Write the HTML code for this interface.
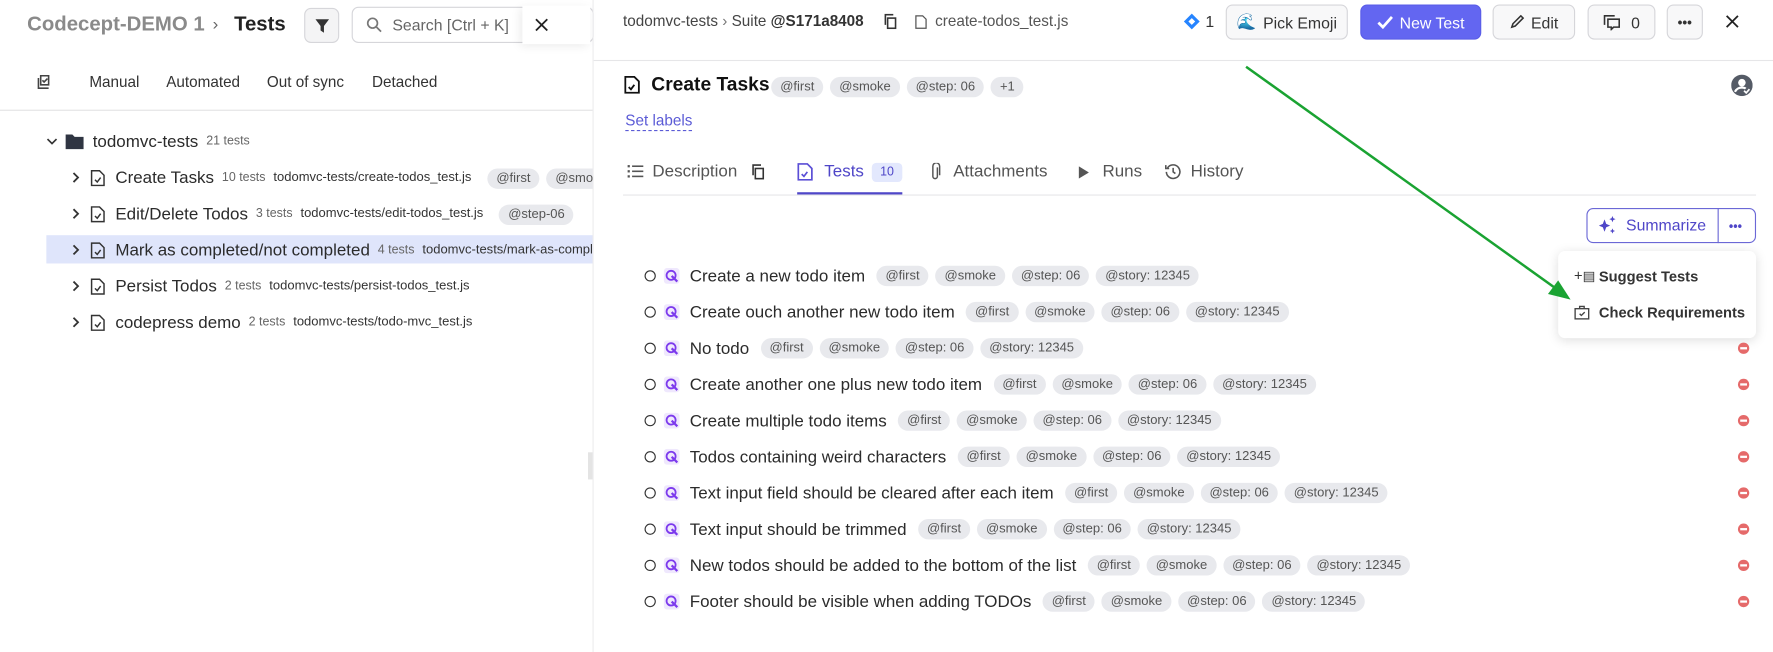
<!DOCTYPE html>
<html><head><meta charset="utf-8"><style>
*{box-sizing:border-box;margin:0;padding:0}
html,body{width:1773px;height:652px;overflow:hidden;background:#fff}
#w{position:absolute;left:0;top:0;width:1568px;height:577px;transform:scale(1.13074);transform-origin:0 0;font-family:"Liberation Sans",sans-serif;color:#333}
.a{position:absolute;white-space:nowrap}
.tag{display:inline-block;background:#e8e9ed;color:#555;border-radius:10px;font-size:11.5px;padding:2px 8px;margin-right:6px;line-height:14px;white-space:nowrap}
.btn{position:absolute;border:1px solid #d6d6da;border-radius:6px;background:#f8f8f9;font-size:14px;color:#333;display:flex;align-items:center;justify-content:center;gap:6px}
.row{position:absolute;left:0;height:26px;display:flex;align-items:center;font-size:15px;color:#2b2b2b;white-space:nowrap}
.row>*{flex-shrink:0;white-space:nowrap}
.small{font-size:11px;color:#666;margin-left:7px}
.path{font-size:11.5px;color:#333;margin-left:7px}
</style></head><body><div id="w">
<div class="a" style="left:24px;top:11px;font-size:18px;font-weight:bold;color:#8a8a8a">Codecept-DEMO 1</div>
<div class="a" style="left:188px;top:13px;font-size:15px;color:#666">›</div>
<div class="a" style="left:207px;top:11px;font-size:18px;font-weight:bold;color:#222">Tests</div>
<div class="btn" style="left:269px;top:7px;width:31px;height:31px;background:#f4f4f5"><svg width="14" height="14" viewBox="0 0 14 14"><path d="M1 1h12L8.5 7v6L5.5 11V7z" fill="#333"/></svg></div>
<div class="a" style="left:311px;top:6px;width:214px;height:32px;border:1px solid #d6d6da;border-radius:6px"></div>
<svg class="a" style="left:324px;top:15px" width="14" height="14" viewBox="0 0 14 14"><circle cx="5.5" cy="5.5" r="4.3" fill="none" stroke="#777" stroke-width="1.5"/><path d="M9 9l4 4" stroke="#777" stroke-width="1.5"/></svg>
<div class="a" style="left:347px;top:14px;font-size:14px;color:#666">Search [Ctrl + K]</div>
<div class="a" style="left:462px;top:5px;width:60px;height:34px;background:#fff;box-shadow:-2px 2px 8px rgba(0,0,0,.08)"></div>
<svg class="a" style="left:473px;top:16px" width="12" height="12" viewBox="0 0 12 12"><path d="M1 1l10 10M11 1L1 11" stroke="#222" stroke-width="1.6"/></svg>
<svg class="a" style="left:31px;top:66px" width="14" height="14" viewBox="0 0 14 14" fill="none" stroke="#444" stroke-width="1.4"><path d="M3 3v9h9"/><path d="M5 1h7v8H5z"/><path d="M6.5 5l1.5 1.5 3-3"/></svg>
<div class="a" style="left:79px;top:65px;font-size:13.5px;color:#333">Manual</div>
<div class="a" style="left:147px;top:65px;font-size:13.5px;color:#333">Automated</div>
<div class="a" style="left:236px;top:65px;font-size:13.5px;color:#333">Out of sync</div>
<div class="a" style="left:329px;top:65px;font-size:13.5px;color:#333">Detached</div>
<div class="a" style="left:0;top:97px;width:524px;height:1px;background:#e2e2e4"></div>
<div class="row" style="top:112px;left:40px"><svg width="12" height="12" viewBox="0 0 12 12"><path d="M2 4l4 4 4-4" fill="none" stroke="#333" stroke-width="1.5"/></svg><svg style="margin-left:6px" width="16" height="14" viewBox="0 0 16 14"><path d="M0 1h6l2 2h8v11H0z" fill="#2f3542"/></svg><span style="margin-left:8px">todomvc-tests</span><span class="small">21 tests</span></div>
<div class="a" style="left:41px;top:208px;width:483px;height:25px;background:#dfe5fb"></div>
<div id="tree"></div>
<div class="a" style="left:524px;top:0;width:1px;height:577px;background:#ececee"></div>
<div class="a" style="left:520px;top:400px;width:4px;height:24px;background:#e4e4e4"></div>
<div class="a" style="left:551px;top:11px;font-size:13.5px;color:#444">todomvc-tests <span style="color:#777">›</span> Suite <b style="color:#333">@S171a8408</b></div>
<svg class="a" style="left:781px;top:12px" width="13" height="14" viewBox="0 0 13 14" fill="none" stroke="#333" stroke-width="1.4"><rect x="4" y="4" width="7" height="9"/><path d="M2 10V1h7"/></svg>
<svg class="a" style="left:809px;top:13px" width="11" height="13" viewBox="0 0 11 13" fill="none" stroke="#555" stroke-width="1.1"><path d="M1 1h6l3 3v8H1z"/></svg>
<div class="a" style="left:827px;top:11px;font-size:13.5px;color:#555">create-todos_test.js</div>
<svg class="a" style="left:1046px;top:11px" width="16" height="16" viewBox="0 0 16 16"><path d="M8 1l7 7-7 7-7-7z" fill="#2684ff"/><path d="M8 5l3 3-3 3-3-3z" fill="#fff"/></svg>
<div class="a" style="left:1066px;top:11px;font-size:14px;color:#333">1</div>
<div class="btn" style="left:1084px;top:4px;width:108px;height:31px"><span style="color:#3aa0e8">🌊</span>Pick Emoji</div>
<div class="btn" style="left:1203px;top:4px;width:107px;height:31px;background:#6366f1;border-color:#5a5de8;color:#fff"><svg width="14" height="12" viewBox="0 0 14 12"><path d="M1 6l4 4 8-9" fill="none" stroke="#fff" stroke-width="2.4"/></svg>New Test</div>
<div class="btn" style="left:1320px;top:4px;width:73px;height:31px"><svg width="13" height="13" viewBox="0 0 13 13"><path d="M2 11l1-3 7-7 2 2-7 7z" fill="none" stroke="#333" stroke-width="1.4"/></svg>Edit</div>
<div class="btn" style="left:1404px;top:4px;width:60px;height:31px"><svg width="15" height="14" viewBox="0 0 15 14" fill="none" stroke="#333" stroke-width="1.4"><path d="M1 9V1h9"/><path d="M4 4h10v7H9l-2 2v-2H4z"/></svg>&nbsp;0</div>
<div class="btn" style="left:1474px;top:4px;width:32px;height:31px;font-weight:bold;font-size:12px">•••</div>
<svg class="a" style="left:1526px;top:13px" width="12" height="12" viewBox="0 0 12 12"><path d="M1 1l10 10M11 1L1 11" stroke="#222" stroke-width="1.6"/></svg>
<div class="a" style="left:525px;top:53px;width:1043px;height:1px;background:#e6e6e8"></div>
<svg class="a" style="left:552px;top:67px" width="14" height="16" viewBox="0 0 14 16" fill="none" stroke="#111" stroke-width="1.6"><path d="M1 1h8l4 4v10H1z"/><path d="M4 10l2 2 3-4"/></svg>
<div class="a" style="left:576px;top:65px;font-size:17px;font-weight:bold;color:#111">Create Tasks</div>
<div class="a" style="left:682px;top:67px"><span class="tag">@first</span><span class="tag">@smoke</span><span class="tag">@step: 06</span><span class="tag">+1</span></div>
<svg class="a" style="left:1531px;top:66px" width="19" height="19" viewBox="0 0 20 20"><circle cx="10" cy="10" r="10" fill="#555b66"/><circle cx="10" cy="7.5" r="3.5" fill="#fff"/><path d="M3.5 16c1.5-3 4-4 6.5-4s3 .5 3.5 1" stroke="#fff" stroke-width="2" fill="none"/><path d="M12 15l2 2 3-3.5" stroke="#fff" stroke-width="1.6" fill="none"/></svg>
<div class="a" style="left:553px;top:99px;font-size:13.5px;color:#5b5bd6;border-bottom:1px dashed #5b5bd6;padding-bottom:1px">Set labels</div>
<svg class="a" style="left:555px;top:145px" width="14" height="13" viewBox="0 0 14 13" fill="#555"><rect x="0" y="1" width="2" height="2"/><rect x="0" y="5.5" width="2" height="2"/><rect x="0" y="10" width="2" height="2"/><rect x="4" y="1.3" width="10" height="1.4"/><rect x="4" y="5.8" width="10" height="1.4"/><rect x="4" y="10.3" width="10" height="1.4"/></svg>
<div class="a" style="left:577px;top:143px;font-size:15px;color:#555">Description</div>
<svg class="a" style="left:665px;top:145px" width="12" height="14" viewBox="0 0 12 14" fill="none" stroke="#333" stroke-width="1.4"><rect x="3" y="4" width="7" height="9"/><path d="M1 10V1h7"/></svg>
<svg class="a" style="left:705px;top:144px" width="14" height="16" viewBox="0 0 14 16" fill="none" stroke="#5b4fd6" stroke-width="1.5"><path d="M1 1h8l4 4v10H1z"/><path d="M4 10l2 2 3-4"/></svg>
<div class="a" style="left:729px;top:143px;font-size:15px;color:#4f46c8">Tests</div>
<div class="a" style="left:771px;top:144px;width:27px;height:17px;background:#e3e8fd;border-radius:4px;font-size:11px;color:#4f46c8;text-align:center;line-height:17px">10</div>
<div class="a" style="left:705px;top:170px;width:93px;height:2px;background:#4f46c8"></div>
<svg class="a" style="left:822px;top:144px" width="10" height="16" viewBox="0 0 10 16" fill="none" stroke="#555" stroke-width="1.3"><path d="M7 4v8a2 2 0 0 1-4 0V3a3 3 0 0 1 6 0v8"/></svg>
<div class="a" style="left:843px;top:143px;font-size:15px;color:#555">Attachments</div>
<svg class="a" style="left:954px;top:147px" width="9" height="11" viewBox="0 0 9 11"><path d="M0 0l9 5.5L0 11z" fill="#555"/></svg>
<div class="a" style="left:975px;top:143px;font-size:15px;color:#555">Runs</div>
<svg class="a" style="left:1030px;top:144px" width="15" height="15" viewBox="0 0 15 15" fill="none" stroke="#555" stroke-width="1.4"><path d="M2.5 4.5A6 6 0 1 1 1.5 8"/><path d="M1 2v3h3"/><path d="M7.5 4.5v3.5l2 1.5"/></svg>
<div class="a" style="left:1053px;top:143px;font-size:15px;color:#555">History</div>
<div class="a" style="left:551px;top:172px;width:1002px;height:1px;background:#e6e6e8"></div>
<div class="a" style="left:1403px;top:184px;width:150px;height:31px;border:1px solid #6b68d6;border-radius:6px"></div>
<div class="a" style="left:1519px;top:184px;width:1px;height:31px;background:#6b68d6"></div>
<svg class="a" style="left:1413px;top:191px" width="18" height="17" viewBox="0 0 18 17" fill="#4f46c8"><path d="M6 3l1.5 4L11 8.5 7.5 10 6 14 4.5 10 1 8.5 4.5 7z"/><path d="M13 0l.8 2 2 .8-2 .8-.8 2-.8-2-2-.8 2-.8z"/><path d="M13 11l.7 1.6 1.6.7-1.6.7-.7 1.6-.7-1.6-1.6-.7 1.6-.7z"/></svg>
<div class="a" style="left:1438px;top:191px;font-size:14px;color:#4f46c8">Summarize</div>
<div class="a" style="left:1529px;top:195px;font-size:11px;color:#4f46c8;font-weight:bold">•••</div>
<div class="a" style="left:1378px;top:222px;width:175px;height:77px;background:#fff;border-radius:6px;box-shadow:0 2px 10px rgba(0,0,0,.13)"></div>
<div class="a" style="left:1392px;top:236px;font-size:13px;color:#333">+<span style="font-size:12px">▤</span></div>
<div class="a" style="left:1414px;top:237px;font-size:13px;font-weight:bold;color:#333">Suggest Tests</div>
<svg class="a" style="left:1392px;top:270px" width="14" height="13" viewBox="0 0 14 13" fill="none" stroke="#444" stroke-width="1.2"><rect x="1" y="3" width="12" height="9"/><path d="M5 3V1h4v2M5 7.5l1.5 1.5 3-3"/></svg>
<div class="a" style="left:1414px;top:269px;font-size:13px;font-weight:bold;color:#333">Check Requirements</div>
<div id="tests"></div>
<svg class="a" style="left:0;top:0" width="1568" height="577"><path d="M1102 59L1380 258" stroke="#1aa332" stroke-width="2.2"/><path d="M1389 265l-20-5 9-12z" fill="#1aa332"/></svg>
</div>
<script>
var tr=[["Create Tasks","10 tests","todomvc-tests/create-todos_test.js",["@first","@smoke"]],["Edit/Delete Todos","3 tests","todomvc-tests/edit-todos_test.js",["@step-06"]],["Mark as completed/not completed","4 tests","todomvc-tests/mark-as-completed_test.js",[]],["Persist Todos","2 tests","todomvc-tests/persist-todos_test.js",[]],["codepress demo","2 tests","todomvc-tests/todo-mvc_test.js",[]]];
var h='';tr.forEach(function(r,i){h+='<div class="row" style="top:'+(144+32*i)+'px;left:62px;width:462px;overflow:hidden"><svg width="10" height="12" viewBox="0 0 10 12"><path d="M3 2l4 4-4 4" fill="none" stroke="#333" stroke-width="1.6"/></svg><svg style="margin-left:8px" width="13" height="15" viewBox="0 0 13 15" fill="none" stroke="#333" stroke-width="1.3"><path d="M1 1h7l4 4v9H1z"/><path d="M4 9l2 2 3-4"/></svg><span style="margin-left:9px">'+r[0]+'</span><span class="small">'+r[1]+'</span><span class="path">'+r[2]+'</span><span style="margin-left:14px">'+r[3].map(function(t){return '<span class="tag">'+t+'</span>'}).join('')+'</span></div>'});
document.getElementById('tree').innerHTML=h;
var ts=["Create a new todo item","Create ouch another new todo item","No todo","Create another one plus new todo item","Create multiple todo items","Todos containing weird characters","Text input field should be cleared after each item","Text input should be trimmed","New todos should be added to the bottom of the list","Footer should be visible when adding TODOs"];
h='';ts.forEach(function(t,i){var y=231+32*i;h+='<div class="row" style="top:'+y+'px;left:570px"><span style="width:10px;height:10px;border:1.4px solid #333;border-radius:50%;display:inline-block"></span><svg style="margin-left:7px" width="14" height="14" viewBox="0 0 14 14"><rect width="14" height="14" rx="3" fill="#efe8fd"/><circle cx="6.5" cy="6.5" r="4" fill="none" stroke="#7c3aed" stroke-width="1.6"/><path d="M7 7l5 5" stroke="#7c3aed" stroke-width="2"/></svg><span style="margin-left:9px;margin-right:10px">'+t+'</span><span class="tag">@first</span><span class="tag">@smoke</span><span class="tag">@step: 06</span><span class="tag">@story: 12345</span></div>';if(i>=2)h+='<div class="a" style="left:1537px;top:'+(y+8)+'px;width:10px;height:10px;border-radius:50%;background:#e56a6a"><div style="margin:4.3px 2px;height:1.4px;background:#fff"></div></div>'});
document.getElementById('tests').innerHTML=h;
</script>
</body></html>
